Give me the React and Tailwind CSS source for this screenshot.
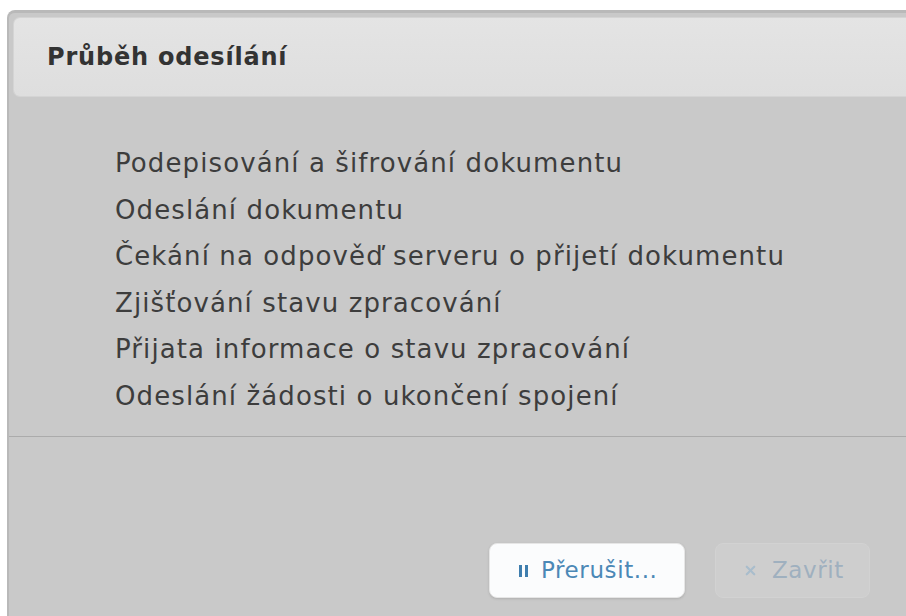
import { X } from "lucide-react";

const steps = [
  "Podepisování a šifrování dokumentu",
  "Odeslání dokumentu",
  "Čekání na odpověď serveru o přijetí dokumentu",
  "Zjišťování stavu zpracování",
  "Přijata informace o stavu zpracování",
  "Odeslání žádosti o ukončení spojení",
];

const font = { fontFamily: '"DejaVu Sans", "Liberation Sans", sans-serif' };

export default function App() {
  return (
    <div className="h-[616px] w-[906px] overflow-hidden bg-white pt-[10px] pl-[7px]" style={font}>
      <div className="flex h-full flex-col rounded-tl-[8px] border-t-[3px] border-l-[2px] border-[#b9b9b9] bg-[#c9c9c9]">
        {/* dialog title */}
        <div className="mt-[4px] ml-[4px] flex h-[80px] items-center rounded-l-[7px] border border-r-0 border-[#d4d4d4] bg-gradient-to-b from-[#e4e4e4] to-[#dedede] pl-[33px]">
          <h1 className="text-[24px] font-bold tracking-[0.8px] text-[#333]">Průběh odesílání</h1>
        </div>

        {/* progress steps */}
        <ul className="flex h-[339px] flex-col pt-[43px] pl-[106px] text-[26px] leading-[46.6px] tracking-[1.1px] text-[#3d3d3d]">
          {steps.map((s) => (
            <li key={s}>{s}</li>
          ))}
        </ul>

        {/* footer */}
        <div className="flex flex-1 items-start justify-end gap-[30px] border-t border-[#ababab] pt-[106px] pr-[36px]">
          <button className="flex h-[55px] w-[196px] items-center gap-[13px] rounded-[8px] border border-[#e6e6e6] bg-[#fbfcfd] pl-[29px] text-[23px] tracking-[0.6px] text-[#4b88b6] shadow-sm">
            <span className="flex gap-[3px]">
              <span className="h-[12px] w-[3px] bg-[#3f7eae]" />
              <span className="h-[12px] w-[3px] bg-[#3f7eae]" />
            </span>
            Přerušit...
          </button>
          <button className="flex h-[55px] w-[155px] items-center gap-[14px] rounded-[8px] border border-[#d2d2d2] bg-[#cecece] pl-[27px] text-[23px] tracking-[0.6px] text-[#9fb0bf]">
            <X size={15} strokeWidth={3.5} className="text-[#a9bdcc]" />
            Zavřit
          </button>
        </div>
      </div>
    </div>
  );
}
